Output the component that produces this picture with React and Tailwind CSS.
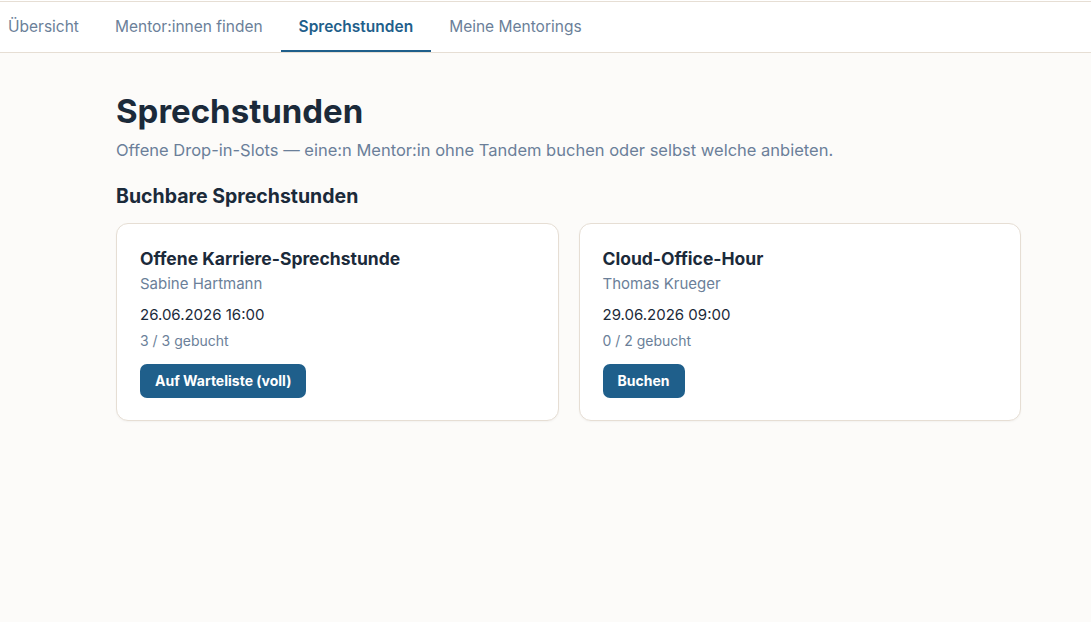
export default function App() {
  const tabs = ["Übersicht", "Mentor:innen finden", "Sprechstunden", "Meine Mentorings"];
  const slots = [
    { title: "Offene Karriere-Sprechstunde", mentor: "Sabine Hartmann", date: "26.06.2026 16:00", booked: "3 / 3 gebucht", action: "Auf Warteliste (voll)" },
    { title: "Cloud-Office-Hour", mentor: "Thomas Krueger", date: "29.06.2026 09:00", booked: "0 / 2 gebucht", action: "Buchen" },
  ];
  return (
    <div className="min-h-[622px] bg-[#fcfbf9] text-[#1b2a3a]" style={{ fontFamily: "Inter, 'Noto Sans', sans-serif" }}>
      <nav className="h-[52px] bg-white border-t border-t-[#e6ded4] border-b border-b-[#e6ded4] mt-px flex">
        {tabs.map((t, i) => (
          <div
            key={t}
            className={
              "h-full flex items-center pt-[2px] text-[15.5px] " +
              (i === 0 ? "pl-2 pr-[18px] " : "px-[18px] ") +
              (i === 2 ? "text-[#1f5f8b] font-semibold border-b-2 border-[#1f5f8b]" : "text-[#6b7f99] border-b-2 border-transparent")
            }
          >
            {t}
          </div>
        ))}
      </nav>
      <main className="ml-[116px] w-[905px] pt-[38px]">
        <h1 className="text-[33px] leading-[40px] font-bold text-[#1b2a3a]">Sprechstunden</h1>
        <p className="mt-[7px] text-[16.5px] text-[#6b7f99]">
          Offene Drop-in-Slots — eine:n Mentor:in ohne Tandem buchen oder selbst welche anbieten.
        </p>
        <h2 className="mt-[20px] text-[19.5px] leading-[26px] font-bold">Buchbare Sprechstunden</h2>
        <div className="mt-[14px] grid grid-cols-2 gap-[20px]">
          {slots.map((s) => (
            <div key={s.title} className="bg-white border border-[#e6ded4] rounded-[12px] px-[23px] pt-[23px] pb-[22px] shadow-[0_1px_2px_rgba(0,0,0,0.04)]">
              <div className="text-[17.5px] leading-[24px] font-bold">{s.title}</div>
              <div className="mt-[2px] text-[15px] leading-[22px] text-[#6b7f99]">{s.mentor}</div>
              <div className="mt-[9px] text-[15px] leading-[22px] text-[#1b2a3a]">{s.date}</div>
              <div className="mt-[5px] text-[14px] leading-[20px] text-[#6b7f99]">{s.booked}</div>
              <button className="mt-[13px] h-[34px] px-[15px] rounded-[7px] bg-[#1f5f8b] text-white text-[14px] font-bold">
                {s.action}
              </button>
            </div>
          ))}
        </div>
      </main>
    </div>
  );
}
